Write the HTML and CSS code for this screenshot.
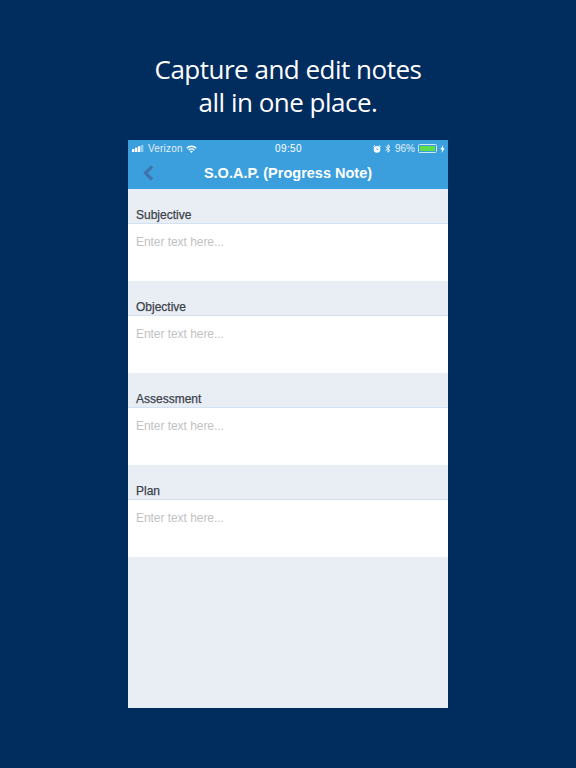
FILE: index.html
```html
<!DOCTYPE html>
<html lang="en">
<head>
<meta charset="utf-8">
<title>S.O.A.P. (Progress Note)</title>
<link rel="stylesheet" href="styles.css">
</head>
<body>
<main class="page">
  <h1 class="headline">Capture and edit notes<br>all in one place.</h1>
  <div class="phone">
    <header class="appbar">
      <div class="status">
        <div class="status-left">
          <svg class="signal" width="13" height="7" viewBox="0 0 13 7"><rect x="0" y="4" width="2.4" height="3" fill="#fff"/><rect x="3" y="2.6" width="2.4" height="4.4" fill="#fff"/><rect x="6" y="1.2" width="2.4" height="5.8" fill="#fff"/><rect x="9" y="0" width="2.4" height="7" fill="#fff" opacity=".45"/></svg>
          <span class="carrier">Verizon</span>
          <svg class="wifi" width="11" height="8" viewBox="0 0 11 8"><path d="M0.3 2.6a7.4 7.4 0 0 1 10.4 0l-1 1.1a6 6 0 0 0-8.4 0zM2.2 4.6a4.6 4.6 0 0 1 6.6 0l-1 1.1a3.2 3.2 0 0 0-4.6 0zM4.1 6.5a2 2 0 0 1 2.8 0L5.5 8z" fill="#fff"/></svg>
        </div>
        <div class="status-time">09:50</div>
        <div class="status-right">
          <svg class="alarm" width="8" height="8" viewBox="0 0 8 8"><circle cx="4" cy="4.4" r="3.3" fill="#fff"/><path d="M0.3 1.8 1.8 0.4M7.7 1.8 6.2 0.4" stroke="#fff" stroke-width="1"/><path d="M4 2.6v2h1.4" stroke="#3a9fdc" stroke-width=".7" fill="none"/></svg>
          <svg class="bt" width="6" height="9" viewBox="0 0 6 9"><path d="M.6 2.4 5 6.4 3 8.2V.8l2 1.8L.6 6.6" stroke="#fff" stroke-width=".9" fill="none"/></svg>
          <span class="pct">96%</span>
          <div class="battery"><div class="battery-fill"></div></div>
          <svg class="bolt" width="5" height="8" viewBox="0 0 5 8"><path d="M3.2 0 .3 4.5h1.8L1.6 8l3.1-4.8H2.8z" fill="#fff"/></svg>
        </div>
      </div>
      <div class="nav">
        <svg class="back" width="11" height="16" viewBox="0 0 11 16"><path d="M9 1.5 2.5 8 9 14.5" fill="none" stroke="#3f74ab" stroke-width="3.2"/></svg>
        <div class="nav-title">S.O.A.P. (Progress Note)</div>
      </div>
    </header>
    <section class="note"><div class="label">Subjective</div><div class="field">Enter text here...</div></section>
    <section class="note"><div class="label">Objective</div><div class="field">Enter text here...</div></section>
    <section class="note"><div class="label">Assessment</div><div class="field">Enter text here...</div></section>
    <section class="note"><div class="label">Plan</div><div class="field">Enter text here...</div></section>
  </div>
</main>
</body>
</html>
```

FILE: styles.css
```css
* { box-sizing: border-box; }
html, body { margin: 0; padding: 0; }
body { background: #002c5e; width: 576px; height: 768px; overflow: hidden; }
.page { display: flex; flex-direction: column; align-items: center; padding-top: 53px; }
.headline {
  margin: 0 0 21px;
  height: 66px;
  font: 400 26px/33px "Open Sans", sans-serif;
  letter-spacing: -0.5px;
  color: #fff;
  text-align: center;
}
.phone { width: 320px; height: 568px; background: #e9eef5; display: flex; flex-direction: column; }
.appbar { height: 49px; background: #3a9fdc; color: #fff; flex: none; }
.status { height: 17px; display: grid; grid-template-columns: 1fr auto 1fr; align-items: center; padding: 0 3px 0 4px; font: 400 10px/17px "Liberation Sans", sans-serif; }
.status-left, .status-right { display: flex; align-items: center; }
.status-left { gap: 3px; }
.status-right { justify-content: flex-end; gap: 3px; }
.carrier { letter-spacing: .2px; color: #e4f1fa; }
.status-time { font-size: 10px; letter-spacing: .4px; }
.alarm { margin-right: 1px; }
.bt { margin-right: 1px; }
.pct { color: #e4f1fa; }
.battery { width: 19px; height: 9px; border: 1px solid #cfe6f5; border-radius: 1.5px; padding: 1px; }
.battery-fill { height: 100%; width: 100%; background: #5fdc4a; }
.nav { position: relative; height: 32px; display: flex; align-items: center; justify-content: center; }
.back { position: absolute; left: 15px; top: 8px; }
.nav-title { font: 700 14.5px/32px "Liberation Sans", sans-serif; }
.note { flex: none; height: 92px; display: flex; flex-direction: column; }
.label { height: 35px; padding: 19px 8px 0; font: 400 12px/14px "Liberation Sans", sans-serif; color: #3c424a; -webkit-text-stroke: .25px #3c424a; border-bottom: 1px solid #d3e2f2; }
.field { height: 57px; background: #fff; padding: 10px 8px 0; font: 400 12px/16px "Liberation Sans", sans-serif; letter-spacing: -.05px; color: #c2c2c2; }
```
